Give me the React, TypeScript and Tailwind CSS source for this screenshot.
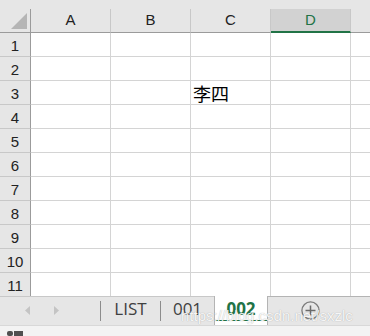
import React from 'react';

const columns = ['A', 'B', 'C', 'D'];
const rows = Array.from({ length: 11 }, (_, i) => i + 1);

const App: React.FC = () => {
  return (
    <div className="relative w-[370px] h-[336px] overflow-hidden bg-[#e6e6e6] font-['Liberation_Sans',Arial,sans-serif] text-[#222]">
      {/* top band */}
      <div className="h-[9px]" />

      {/* column headers */}
      <div className="flex h-[24px]">
        <div className="w-[31px] shrink-0 flex items-end justify-end pr-[3px] pb-[3px] border-r border-b border-[#9b9b9b]">
          <svg width="16" height="16" viewBox="0 0 16 16">
            <polygon points="16,0 16,16 0,16" fill="#b5b5b5" />
          </svg>
        </div>
        {columns.map((c) => (
          <div
            key={c}
            className={`w-[80px] shrink-0 flex items-center justify-center text-[15px] border-r border-r-[#c8c8c8] ${
              c === 'D'
                ? 'bg-[#d2d2d2] text-[#217346] border-b-2 border-b-[#217346]'
                : 'border-b border-b-[#9b9b9b]'
            }`}
          >
            {c}
          </div>
        ))}
        <div className="flex-1 border-b border-[#9b9b9b]" />
      </div>

      {/* rows */}
      {rows.map((r) => (
        <div key={r} className={`flex ${r === 11 ? 'h-[23px]' : 'h-[24px]'}`}>
          <div
            className={`w-[31px] shrink-0 flex items-end justify-center pb-[2px] text-[15px] leading-[17px] border-r border-r-[#9b9b9b] ${
              r === 11 ? '' : 'border-b border-b-[#c8c8c8]'
            }`}
          >
            {r}
          </div>
          {columns.map((c) => (
            <div
              key={c}
              className={`w-[80px] shrink-0 bg-white border-r border-r-[#d4d4d4] flex items-center ${
                r === 11 ? '' : 'border-b border-b-[#d4d4d4]'
              }`}
            >
              {r === 3 && c === 'C' && (
                <span className="pl-[2px] pt-[1px] text-[18px] leading-[20px] text-black font-['Noto_Sans_CJK_SC',sans-serif]">
                  李四
                </span>
              )}
            </div>
          ))}
          <div className={`flex-1 bg-white ${r === 11 ? '' : 'border-b border-b-[#d4d4d4]'}`} />
        </div>
      ))}

      {/* sheet tabs */}
      <div className="flex h-[29px] font-['Open_Sans',sans-serif] text-[17px] text-[#404040]">
        <div className="w-[100px] shrink-0 border-t border-[#c8c8c8] flex items-center gap-[24px] pl-[25px] pb-[1px]">
          <svg width="5" height="9" viewBox="0 0 5 9">
            <polygon points="5,0 5,9 0,4.5" fill="#c4c4c4" />
          </svg>
          <svg width="5" height="9" viewBox="0 0 5 9">
            <polygon points="0,0 0,9 5,4.5" fill="#c4c4c4" />
          </svg>
        </div>
        <div className="w-px shrink-0 border-t border-[#c8c8c8] flex flex-col">
          <div className="mt-[4px] h-[20px] bg-[#8c8c8c]" />
        </div>
        <div className="w-[59px] shrink-0 border-t border-[#c8c8c8] flex justify-center pt-[1px] leading-[22px]">
          LIST
        </div>
        <div className="w-px shrink-0 border-t border-[#c8c8c8] flex flex-col">
          <div className="mt-[4px] h-[20px] bg-[#8c8c8c]" />
        </div>
        <div className="w-[53px] shrink-0 border-t border-[#c8c8c8] flex justify-center pt-[1px] leading-[22px]">
          001
        </div>
        <div className="w-[54px] shrink-0 bg-white border-x border-[#b4b4b4] flex flex-col items-center pt-[2px]">
          <span className="font-bold text-[#217346] leading-[22px]">002</span>
          <div className="mt-auto mb-[4px] h-[2px] w-full bg-[#217346]" />
        </div>
        <div className="flex-1 border-t border-[#b4b4b4] flex items-center pl-[33px] pb-[1px]">
          <svg width="19" height="19" viewBox="0 0 19 19">
            <circle cx="9.5" cy="9.5" r="8.6" fill="none" stroke="#7a7a7a" strokeWidth="1.3" />
            <path d="M9.5 4.5 V14.5 M4.5 9.5 H14.5" stroke="#6a6a6a" strokeWidth="1.5" />
          </svg>
        </div>
      </div>

      {/* status bar */}
      <div className="h-[11px] bg-[#f3f3f3] border-t border-[#d8d8d8] flex items-end pl-[7px]">
        <svg width="16" height="7" viewBox="0 0 16 7">
          <rect x="0" y="2" width="6" height="5" rx="2" fill="#505050" />
          <rect x="7" y="2" width="9" height="5" fill="#505050" />
        </svg>
      </div>

      {/* watermark */}
      <span className="absolute left-[181px] top-[307px] text-[15px] leading-[18px] text-white/90 font-['Liberation_Sans',Arial,sans-serif] [text-shadow:0_0_1px_rgba(0,0,0,0.35)]">
        https://blog.csdn.net/sxzlc
      </span>
    </div>
  );
};

export default App;
